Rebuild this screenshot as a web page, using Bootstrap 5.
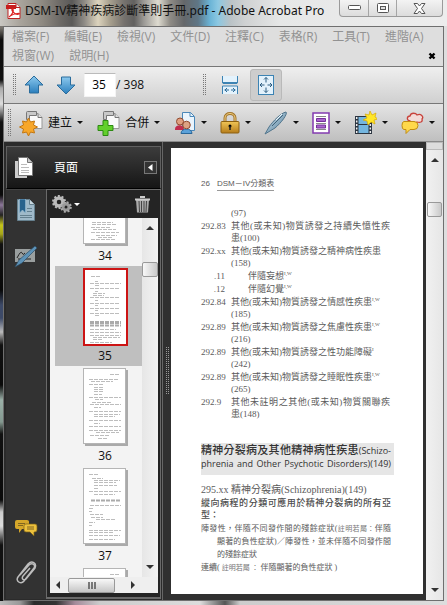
<!DOCTYPE html>
<html lang="zh-Hant">
<head>
<meta charset="utf-8">
<meta name="viewport" content="width=device-width, initial-scale=1">
<title>DSM-IV精神疾病診斷準則手冊.pdf - Adobe Acrobat Pro</title>
<link rel="stylesheet" href="https://cdn.jsdelivr.net/npm/bootstrap@5.3.0/dist/css/bootstrap.min.css">
<style>
  body{font-family:"Open Sans","Noto Sans CJK TC",sans-serif;font-size:12px;line-height:18px;color:#111;
    background:linear-gradient(180deg,#b5b3ae 0,#77736d 28px,#0c0c0c 40px,#111 80px,#aaa 88px,#ddd 104px,#111 122px,#0a0a0a 195px,#8c7799 205px,#222 215px,#c5c51a 225px,#a6a61a 234px,#111 244px,#080808 290px,#3d4a68 305px,#3d4a68 318px,#bbb 332px,#111 345px,#0a0a0a 385px,#9bb0a8 400px,#83988f 422px,#111 434px,#0a0a0a 500px,#ccc 512px,#ddd 526px,#111 545px,#111 600px)}
  button{border:0;padding:0;background:none;color:inherit}
  a{color:inherit;text-decoration:none}
  svg{display:block;flex:none}
  .frame{padding:0 3px 4px;
    background:linear-gradient(90deg,#bbb 0,#999 20px,#2a2a2a 34px,#333 56px,#a48a9a 75px,#ccc 100px,#ddd 200px,#555 225px,#ccc 240px,#ddd 100%) bottom/100% 4px no-repeat,linear-gradient(90deg,transparent 0 50%,#dedede 50%)}
  .titlebar{height:26px;margin:0 -3px;padding-left:5px;
    background:linear-gradient(90deg,#c9c7c2 0,#a9a49c 20px,#8f8a82 42px,#6d6a66 60px,#5a5958 72px,#8c8984 84px,#dcd3bd 98px,#a79f8e 110px,#76726e 124px,#626160 134px,#9c9a96 144px,#dedbd0 158px,#8f8c86 170px,#65676a 184px,#5f7686 198px,#6bb4d6 210px,#8cc8e2 218px,#b9c2c6 230px,#cfd1d2 245px,#e6e7e7 280px,#ededed 100%)}
  .titlebar h1{font:12px/22px "Noto Sans","Noto Sans CJK TC",sans-serif}
  .winbtns{height:17px;border:1px solid #9a9a9a;border-top:0;border-radius:0 0 4px 4px;background:linear-gradient(#f3f3f3,#dcdcdc);margin-right:4px}
  .winbtns button{width:28px;display:grid;place-items:center}
  .winbtns button+button{border-left:1px solid #a5a5a5}
  .winbtns button:last-child{width:46px}
  .appwin{border:1px solid #6f6f6f;background:#303030;min-height:0}
  .menus{background:#dedede;color:#929292;border-bottom:1px solid #777;padding:0 8px 1px;column-gap:15px}
  .menus a{line-height:19px}
  .docclose{right:7px;bottom:6px}
  .tools{background:linear-gradient(#efefef,#d0d0d0);border-bottom:1px solid #777;height:37px}
  .tasks{background:linear-gradient(#e4e4e4,#bfbfbf);border-bottom:1px solid #8a8a8a;height:38px}
  .grip{width:4px;height:22px;background:conic-gradient(#777 25%,transparent 0) 0 0/2px 2px}
  .tasks .grip{height:28px;margin-left:3px}
  .pagebox{width:32px;height:24px;border:1px solid #f4f4f4;border-top-color:#bbb;background:#fff;text-align:center;padding:0 2px 2px 0}
  .pagecount{width:86px}
  .fitbtn{width:32px;height:32px;display:grid;place-items:center;border-radius:3px}
  .fitbtn.on{background:#cdcdcd;border:1px solid #b9b9b9}
  .caret::after{content:"";border:3px solid transparent;border-top-color:#111;border-bottom:0;margin-left:5px}
  .task{height:30px;display:flex;align-items:center}
  .side{width:158px;padding:4px 1px 1px 2px;background:#2b2b2b}
  .sidehead{height:43px;border:1px solid #606060;border-bottom-color:#000;background:linear-gradient(#3c3c3c,#161616);color:#fff}
  .sidehead span{margin-left:21px}
  .collapse-btn{width:13px;height:13px;border:1px solid #777;background:#333;display:grid;place-items:center;margin-right:3px}
  .rail{width:40px;background:#323232;padding:9px 0 14px;border-top:1px solid #444}
  .panel{border:1px solid #6a6a6a;border-bottom-width:2px;background:#242424;padding:0 2px 4px 3px}
  .panelbar{height:28px;padding:0 8px 0 2px}
  .panelbar .caret::after{border-top-color:#fff;margin-left:2px}
  .thumbs{background:#f3f3f3}
  .strip{margin:-52px 0 0 5px}
  .thumb{display:block;height:100px;padding:2px 0 0 13px;text-align:center;line-height:20px;font-size:12px}
  .thumb svg{margin:0 auto}
  .thumb.sel{background:#bfbfbf}
  .vbar{width:16px;background:linear-gradient(90deg,#e6e6e6,#f3f3f3)}
  .vbar .knob{height:15px;margin-top:32px}
  .knob{border:1px solid #999;border-radius:2px;background:linear-gradient(90deg,#f8f8f8,#c9c9c9)}
  .hbar{height:16px;background:#efefef;padding:0 2px}
  .hbar .knob{width:47px;height:15px;background:linear-gradient(#f8f8f8,#c6c6c6)}
  .split{width:9px;border-left:1px solid #666}
  .dots{width:4px;height:48px;background:conic-gradient(#999 25%,transparent 0) 0 0/2px 2px}
  .paper{background:#fff;margin:6px 3px 6px 0;padding:29px 29px 0 30px;color:#5a5a5a;overflow:hidden;
    font:9px/12px "Liberation Serif","Noto Sans CJK TC",serif}
  .runhead{font:8px/14px "Liberation Sans","Noto Sans CJK TC",sans-serif;margin-bottom:16px}
  .runhead u{text-decoration:none;border-bottom:1px solid #999;margin-left:7px;display:inline-block;line-height:12px}
  .entries{margin:0 4px 0 0}
  .entries dt{width:30px;font-weight:400;flex:none}
  .entries dd{margin:0;flex:1;min-width:0}
  .entries>div{display:flex;margin-bottom:1px}
  .entries .subcode dt{text-align:right;padding-right:6px}
  .entries .subcode dd{padding-left:17px}
  .entries sup{font-size:5px;line-height:0;position:static;vertical-align:4px}
  .fill{display:block;text-align:justify;text-align-last:justify;white-space:nowrap}
  .chapter{background:#e6e6e6;color:#333;font:11px/13px "Open Sans","Noto Sans CJK TC",sans-serif;font-weight:500;margin:23px 0 9px;padding:0 3px 5px 0}
  .chapter .latin{font-size:9px}
  .body p{margin:0 3px 1px 0}
  .body .code{font-size:10px}
  .body .kai{color:#4c4c4c;font-weight:500}
  .body .spec{font-size:8px;padding-left:16px;line-height:13px;margin-bottom:0}
  .body .spec .first{margin-left:-16px}
  .body .note{font-size:7px;line-height:1;color:#777}
  .docbar{width:17px;background:linear-gradient(90deg,#f1f1f1,#e6e6e6)}
  .docbar .box{height:8px;border:1px solid #bbb;background:#ddd}
  .docbar .knob{height:15px;margin:40px 1px 0}
  .arw{border:4px solid transparent;align-self:center}
  .arw.up{border-bottom-color:#333;border-top:0}
  .arw.dn{border-top-color:#333;border-bottom:0}
  .arw.lf{border-right-color:#333;border-left:0}
  .arw.rt{border-left-color:#333;border-right:0}
</style>
</head>
<body>
<svg width="0" height="0" class="position-absolute" aria-hidden="true">
  <defs>
    <linearGradient id="blue" x1="0" y1="0" x2="0" y2="1"><stop offset="0" stop-color="#8cc9ee"/><stop offset="1" stop-color="#2b7fbd"/></linearGradient>
    <linearGradient id="gold" x1="0" y1="0" x2="0" y2="1"><stop offset="0" stop-color="#f0c556"/><stop offset="1" stop-color="#b67d1b"/></linearGradient>
    <linearGradient id="pen" x1="0" y1="0" x2="1" y2="1"><stop offset="0" stop-color="#d2e2ec"/><stop offset="1" stop-color="#4f7d9b"/></linearGradient>
    <g id="sheet"><rect x="2" y="2" width="43" height="76" fill="#aaa"/><rect x=".5" y=".5" width="42" height="75" fill="#fff" stroke="#b5b5b5"/></g>
    <g id="docs"><path d="M9.500 3.500h9l4 4v11h-13z" fill="#fafafa" stroke="#999"/><path d="M18.500 3.500v4h4" fill="#ddd" stroke="#777"/><path d="M7 2.500q0-1 1-1h9v4H10v4H7z" fill="#c9c9c9" stroke="#777"/></g>
  </defs>
</svg>
<div class="frame d-flex flex-column vh-100">
  <header class="titlebar d-flex align-items-start flex-shrink-0">
    <div class="d-flex align-items-center flex-grow-1">
      <svg width="16" height="16" viewBox="0 0 16 16"><path d="M3 .5h8l4 4v11H3z" fill="#fff" stroke="#b22"/><path d="M11 .5v4h4" fill="#eee" stroke="#b22"/><path d="M1 2h10v4H1z" fill="#c81e1e"/><path d="M4 14c3-2 5-6 4-8-1-1-2 1 0 3s4 3 6 2-4-1-9 2" fill="none" stroke="#d22" stroke-width="1.200"/></svg>
      <h1 class="m-0 ms-1 text-nowrap">DSM-IV精神疾病診斷準則手冊.pdf - Adobe Acrobat Pro</h1>
    </div>
    <div class="winbtns d-flex">
      <button aria-label="最小化"><svg width="13" height="6"><rect x=".5" y=".5" width="12" height="4" rx="1" fill="#fff" stroke="#555"/></svg></button>
      <button aria-label="最大化"><svg width="12" height="10"><rect x=".5" y=".5" width="11" height="9" rx="1" fill="#fff" stroke="#555"/><rect x="3.500" y="3.500" width="5" height="3" fill="#ddd" stroke="#555"/></svg></button>
      <button aria-label="關閉"><svg width="13" height="11" viewBox="0 0 13 11"><path d="M1 .5h3.500l2 2.500 2-2.500H12L8.500 5.500l3.500 5H8.500l-2-2.500-2 2.500H1l3.500-5z" fill="#fff" stroke="#555"/></svg></button>
    </div>
  </header>
  <div class="appwin d-flex flex-column flex-grow-1">
    <nav class="menus d-flex flex-wrap position-relative flex-shrink-0">
      <a href="#">檔案(F)</a><a href="#">編輯(E)</a><a href="#">檢視(V)</a><a href="#">文件(D)</a><a href="#">注釋(C)</a><a href="#">表格(R)</a><a href="#">工具(T)</a><a href="#">進階(A)</a><a href="#">視窗(W)</a><a href="#">說明(H)</a>
      <button class="docclose position-absolute" aria-label="關閉文件"><svg width="8" height="8"><path d="M1.500 1.500l5 5m0-5l-5 5" stroke="#000" stroke-width="2.400"/></svg></button>
    </nav>
    <div class="tools d-flex align-items-center flex-shrink-0">
      <i class="grip ms-2"></i>
      <button class="ms-1 ps-1" aria-label="上一頁"><svg width="20" height="20" viewBox="0 0 20 20"><path d="M10 1l9 9h-4.500v8h-9v-8H1z" fill="url(#blue)" stroke="#2a6c9c"/></svg></button>
      <button class="ms-2 ps-1" aria-label="下一頁"><svg width="20" height="20" viewBox="0 0 20 20"><path d="M10 19l-9-9h4.500V2h9v8H19z" fill="url(#blue)" stroke="#2a6c9c"/></svg></button>
      <input class="pagebox ms-2" value="35" aria-label="頁碼"><span class="pagecount">/ 398</span>
      <i class="grip me-2"></i>
      <button class="fitbtn" aria-label="符合寬度"><svg width="16" height="20" viewBox="0 0 16 20"><path d="M.5 1v7h15V1M.5 19v-8h15v8" fill="#e3f2fc" stroke="#3c83b3"/><path d="M1 8h14" stroke="#3c83b3" stroke-width="2"/><path d="M2.500 15H7m2 0h4.500M5 13l-2 2 2 2m6-4l2 2-2 2" fill="none" stroke="#2d6d9a"/></svg></button>
      <button class="fitbtn on ms-1" aria-label="符合頁面"><svg width="16" height="20" viewBox="0 0 16 20"><rect x=".5" y=".5" width="15" height="19" fill="#e3f2fc" stroke="#3c83b3"/><path d="M8 2.500v5M8 12.500v5M2 10h4.500M9.500 10H14M6 4.500l2-2 2 2M6 15.500l2 2 2-2M4 8l-2 2 2 2m8-4l2 2-2 2" fill="none" stroke="#2d5d80"/></svg></button>
    </div>
    <div class="tasks d-flex align-items-center flex-shrink-0">
      <i class="grip"></i>
      <div class="d-flex flex-grow-1 justify-content-between ps-2 pe-2">
      <button class="task caret"><svg width="25" height="26" viewBox="0 0 24 26"><use href="#docs"/><path d="M9 8l2 4 4-1-1 4 4 2-4 2 1 4-4-1-2 4-2-4-4 1 1-4-4-2 4-2-1-4 4 1z" fill="#f7a72b" stroke="#c47710"/></svg><span class="ms-1">建立</span></button>
      <button class="task caret"><svg width="25" height="26" viewBox="0 0 24 26"><use href="#docs"/><path d="M6.500 10.500h5v5h5v5h-5v5h-5v-5h-5v-5h5z" fill="#62cf2c" stroke="#2c8a12"/></svg><span class="ms-1">合併</span></button>
      <button class="task caret" aria-label="協同作業"><svg width="22" height="24" viewBox="0 0 22 24"><path d="M8.500 1.500h8l4 4v14h-12z" fill="#eaf4fc" stroke="#4a87b8"/><path d="M16 1.500v4h4" fill="none" stroke="#4a87b8"/><path d="M1 18c0-5 9-5 9 0v1H1z" fill="#c12d4e"/><circle cx="6" cy="10.500" r="3.500" fill="#e0a081" stroke="#924a2e"/><path d="M7 22.500c0-6 11-6 11 0z" fill="#5ba1d9" stroke="#2a6799"/><circle cx="12.500" cy="14" r="3.800" fill="#dda383" stroke="#924a2e"/></svg></button>
      <button class="task caret" aria-label="保全"><svg width="20" height="22" viewBox="0 0 20 22"><path d="M5 11V6c0-6 10-6 10 0v5" fill="none" stroke="#a3752a" stroke-width="3"/><path d="M5 11V6c0-6 10-6 10 0v5" fill="none" stroke="#efcf82"/><rect x="1" y="9.500" width="18" height="11.500" rx="1" fill="url(#gold)" stroke="#8c6112"/><circle cx="10" cy="14" r="1.500"/><path d="M10 14v4" stroke="#222" stroke-width="1.500"/></svg></button>
      <button class="task caret" aria-label="簽名"><svg width="24" height="24" viewBox="0 0 24 24"><path d="M1 23l4-7C9 10 17 2 22 1c2 2-5 11-11 16l-5 3z" fill="url(#pen)" stroke="#51758c"/><path d="M8 15L19 4" stroke="#3e6279"/><path d="M12 9l6-6" stroke="#eef6fa"/></svg></button>
      <button class="task caret" aria-label="表單"><svg width="18" height="22" viewBox="0 0 18 22"><rect x="1" y="1" width="16" height="20" fill="#fff" stroke="#833bb0" stroke-width="1.500"/><path d="M4 4.500h10M4 11.500h10M4 17.500h10" stroke="#888"/><path d="M4.500 6.500h9v3h-9zM4.500 13h9v3h-9z" fill="#a865cc" stroke="#74309b"/></svg></button>
      <button class="task caret" aria-label="多媒體"><svg width="22" height="24" viewBox="0 0 22 24"><path d="M0 5h17v18H0z" fill="#2b3440"/><path d="M3.500 6h10v7h-10zM3.500 14h10v8h-10z" fill="#74b6e0"/><path d="M1.700 6v17M15.300 6v17" stroke="#eee" stroke-width="1.500" stroke-dasharray="2 1.500"/><path d="M15 0l2 4 4-2-1 4 3 2-4 1 1 4-4-2-3 3-1-4-4-1 4-2-2-4 4 1z" fill="#ffe628" stroke="#d9a900" stroke-width=".7"/></svg></button>
      <button class="task caret" aria-label="註解"><svg width="23" height="22" viewBox="0 0 23 22"><path d="M9 9C5 8 6 4 9 4c1-4 6-3 7-1 4-2 7 2 5 4 1 3-2 4-5 3l-3 4v-4c-2 1-4 0-4-1z" fill="#f2dcd9" stroke="#c8433c" stroke-width="1.300"/><path d="M3 9.500h10q4 0 4 4t-4 4H9l-4 4v-4H3q-2 0-2-4t2-4z" fill="#ffd84b" stroke="#c18c12"/></svg></button>
      </div>
    </div>
    <main class="d-flex flex-grow-1" style="min-height:0">
      <aside class="side d-flex flex-column flex-shrink-0">
        <div class="sidehead d-flex align-items-center flex-shrink-0">
          <svg class="ms-2" width="18" height="22" viewBox="0 0 18 22"><path d="M0 4h12v17H0z" fill="#ccc"/><path d="M3.500.5h9l5 5v13h-14z" fill="#fff" stroke="#777"/><path d="M12.500.5v5h5" fill="#ccc" stroke="#777"/><path d="M6 7.500h6M6 10.500h8M6 13.500h8M6 15.500h8" stroke="#bbb"/></svg>
          <span class="flex-grow-1">頁面</span>
          <button class="collapse-btn" aria-label="收合"><svg width="5" height="7"><path d="M4.500 0v7L0 3.500z" fill="#fff"/></svg></button>
        </div>
        <div class="d-flex flex-grow-1" style="min-height:0">
          <div class="rail d-flex flex-column align-items-center">
            <button aria-label="書籤"><svg width="18" height="22" viewBox="0 0 18 22"><path d="M.5.500h12l5 5v16H.5z" fill="#9fb9c9" stroke="#66818f"/><path d="M12.500.5v5h5" fill="#cad8e0" stroke="#66818f"/><path d="M10 9.500h5M10 12.500h5M3 16.500h12M3 18.500h12" stroke="#64808f"/><path d="M2.500 0h6v14l-3-3-3 3z" fill="#28628c" stroke="#8fb6cf" stroke-width=".7"/></svg></button>
            <button class="mt-4" aria-label="簽名"><svg width="24" height="23" viewBox="0 0 24 23"><path d="M1 4h20v13H1z" fill="#9a9f9f"/><path d="M3 13q4-8 5-5t3 0M4 14h13" fill="none" stroke="#222"/><path d="M1 22l4-7L21 1l2 2L8 18z" fill="#5d92b7" stroke="#2c4d66" stroke-width=".7"/></svg></button>
            <button class="mt-auto" aria-label="註解"><svg width="23" height="18" viewBox="0 0 23 18"><path d="M2 1h10q2 0 2 1.500V8q0 2-2 2H7l-3 4v-4H2Q0 10 0 8V3q0-2 2-2z" fill="#d5a72a"/><path d="M11 5h9q2 0 2 2v4q0 2-2 2h-1v4l-4-4h-4q-2 0-2-2V7q0-2 2-2z" fill="#edc13c" stroke="#7b6118" stroke-width=".7"/><path d="M3 4.500h7M3 6.500h5M12 8h7M12 10h7" stroke="#806520"/></svg></button>
            <button class="mt-4" aria-label="附件"><svg width="21" height="24" viewBox="0 0 21 24"><path d="M4 14L13 4c3-3 7 0 5 3L8 20c-3 4-9 0-6-4L12 3c4-4 9-1 7 4L10 18c-2 2-5 0-3-3l7-8" fill="none" stroke="#bdbdbd" stroke-width="1.500"/></svg></button>
          </div>
          <section class="panel d-flex flex-column flex-grow-1" aria-label="頁面縮圖">
            <div class="panelbar d-flex align-items-center justify-content-between flex-shrink-0">
              <button class="caret d-flex align-items-center" aria-label="選項"><svg width="20" height="18" viewBox="0 0 20 18"><circle cx="7" cy="7" r="4" fill="none" stroke="#bbb" stroke-width="3.500"/><circle cx="7" cy="7" r="6" fill="none" stroke="#bbb" stroke-width="2" stroke-dasharray="2 1.770"/><circle cx="14" cy="12" r="3" fill="none" stroke="#999" stroke-width="3"/><circle cx="14" cy="12" r="4.800" fill="none" stroke="#aaa" stroke-width="2" stroke-dasharray="2 1.770"/></svg></button>
              <button aria-label="刪除"><svg width="15" height="17" viewBox="0 0 15 17"><path d="M1 4h13l-1 12.500H2z" fill="#aaa"/><path d="M0 3.500h15M5 1h5" stroke="#ccc" stroke-width="2"/><path d="M4 5l.5 11M6.500 5v11M9 5v11M11.500 5L11 16" stroke="#444"/></svg></button>
            </div>
            <div class="thumbs d-flex flex-grow-1 overflow-hidden">
              <div class="strip flex-grow-1" id="strip"></div>
              <div class="vbar d-flex flex-column pt-1 pb-1">
                <i class="arw up mt-1"></i><div class="knob"></div><i class="arw dn mt-auto mb-1"></i>
              </div>
            </div>
            <div class="hbar d-flex align-items-center flex-shrink-0">
              <i class="arw lf mx-1"></i><div class="knob d-grid ms-1" style="place-items:center"><svg width="8" height="7"><path d="M1 0v7M4 0v7M7 0v7" stroke="#555" stroke-width="1.500"/></svg></div><i class="arw rt ms-3"></i>
            </div>
          </section>
        </div>
      </aside>
      <div class="split d-flex align-items-center justify-content-center"><i class="dots"></i></div>
      <article class="paper flex-grow-1">
        <div class="runhead">26<u>DSM－IV分類表</u></div>
        <dl class="entries">
          <div><dt></dt><dd>(97)</dd></div>
          <div><dt>292.83</dt><dd><span class="fill">其他(或未知)物質誘發之持續失憶性疾</span>患(100)</dd></div>
          <div><dt>292.xx</dt><dd>其他(或未知)物質誘發之精神病性疾患<br>(158)</dd></div>
          <div class="subcode"><dt>.11</dt><dd>伴隨妄想<sup>I,W</sup></dd></div>
          <div class="subcode"><dt>.12</dt><dd>伴隨幻覺<sup>I,W</sup></dd></div>
          <div><dt>292.84</dt><dd>其他(或未知)物質誘發之情感性疾患<sup>I,W</sup><br>(185)</dd></div>
          <div><dt>292.89</dt><dd>其他(或未知)物質誘發之焦慮性疾患<sup>I,W</sup><br>(216)</dd></div>
          <div><dt>292.89</dt><dd>其他(或未知)物質誘發之性功能障礙<sup>I</sup><br>(242)</dd></div>
          <div><dt>292.89</dt><dd>其他(或未知)物質誘發之睡眠性疾患<sup>I,W</sup><br>(265)</dd></div>
          <div><dt>292.9</dt><dd><span class="fill">其他未註明之其他(或未知)物質關聯疾</span>患(148)</dd></div>
        </dl>
        <h2 class="chapter"><span class="fill">精神分裂病及其他精神病性疾患<span class="latin">(Schizo-</span></span><span class="fill latin">phrenia and Other Psychotic Disorders)(149)</span></h2>
        <div class="body">
          <p class="code">295.xx 精神分裂病(Schizophrenia)(149)</p>
          <p class="kai"><span class="fill">縱向病程的分類可應用於精神分裂病的所有亞</span>型：</p>
          <p class="spec"><span class="fill first">陣發性，伴隨不同發作間的殘餘症狀(<span class="note">註明若屬：</span>伴隨</span><span class="fill">顯著的負性症狀)／陣發性，並未伴隨不同發作間</span>的殘餘症狀</p>
          <p class="spec"><span class="d-block first">連續( <span class="note">註明若屬 ：</span> 伴隨顯著的負性症狀 )</span></p>
        </div>
      </article>
      <div class="docbar d-flex flex-column flex-shrink-0">
        <div class="box"></div><i class="arw up mt-2"></i><div class="knob"></div><i class="arw dn mt-auto mb-2"></i>
      </div>
    </main>
  </div>
</div>
<script src="https://cdn.jsdelivr.net/npm/bootstrap@5.3.0/dist/js/bootstrap.bundle.min.js"></script>
<script>
  // Text-line runs of each page miniature: [y, x1, x2, thickness]
  const pages = {
    34: [[54,8,30],[56,8,34],[59,7,28],[61,9,33],[64,7,36],[67,12,34],[69,14,30],[71,7,33]],
    35: [[8,7,18],[13,11,15],[15,6,38],[17,11,17],[20,6,36],[23,11,15],[25,9,22],[27,9,21],[29,6,37],[32,11,15],[35,6,37],[37,11,15],[40,6,36],[42,11,15],[45,6,37],[47,11,16],[54,6,38,3],[57,6,38,2],[61,6,33],[64,6,38],[67,6,38],[69,9,37],[71,9,20],[74,6,29]],
    36: [[6,26,37],[11,5,36],[13,7,30],[16,5,20],[19,10,20],[21,10,20],[23,10,21],[26,10,19],[29,5,38],[31,11,20],[34,8,28],[36,6,38],[39,10,18],[43,5,38],[46,10,37],[48,10,32],[52,5,38],[55,10,17],[58,5,38],[62,5,38],[64,12,36],[67,6,27],[70,14,24]],
    37: [[6,5,16],[10,8,20],[12,10,37],[14,10,33],[17,10,34],[20,10,15],[23,5,38],[26,10,32],[32,7,37,2],[37,6,38],[40,5,10],[43,5,9],[46,6,20],[49,7,20],[51,12,32],[54,5,12],[57,5,9],[62,5,38],[64,5,30],[67,5,37],[71,5,32]],
    38: [[6,26,37],[9,8,30]]
  };
  document.getElementById('strip').innerHTML = Object.entries(pages).map(([n, rows]) => {
    const sel = n === '35';
    const lines = rows.map(([y, a, b, w = 1]) =>
      `<path d="M${a + 1} ${y + .5}H${b}" stroke="${w > 1 ? '#aaa' : '#bdbdbd'}" stroke-width="${w}" stroke-dasharray="4 1"/>`).join('');
    const box = sel ? '<rect x="1" y="1" width="43" height="76" fill="#fff" stroke="#cc1414" stroke-width="2"/>' : '<use href="#sheet"/>';
    const label = n === '38' ? '' : n;
    return `<a class="thumb${sel ? ' sel' : ''}" href="#" aria-label="${n}"><svg width="45" height="78" viewBox="0 0 45 78" aria-hidden="true">${box}${lines}</svg>${label}</a>`;
  }).join('');
</script>
</body>
</html>
